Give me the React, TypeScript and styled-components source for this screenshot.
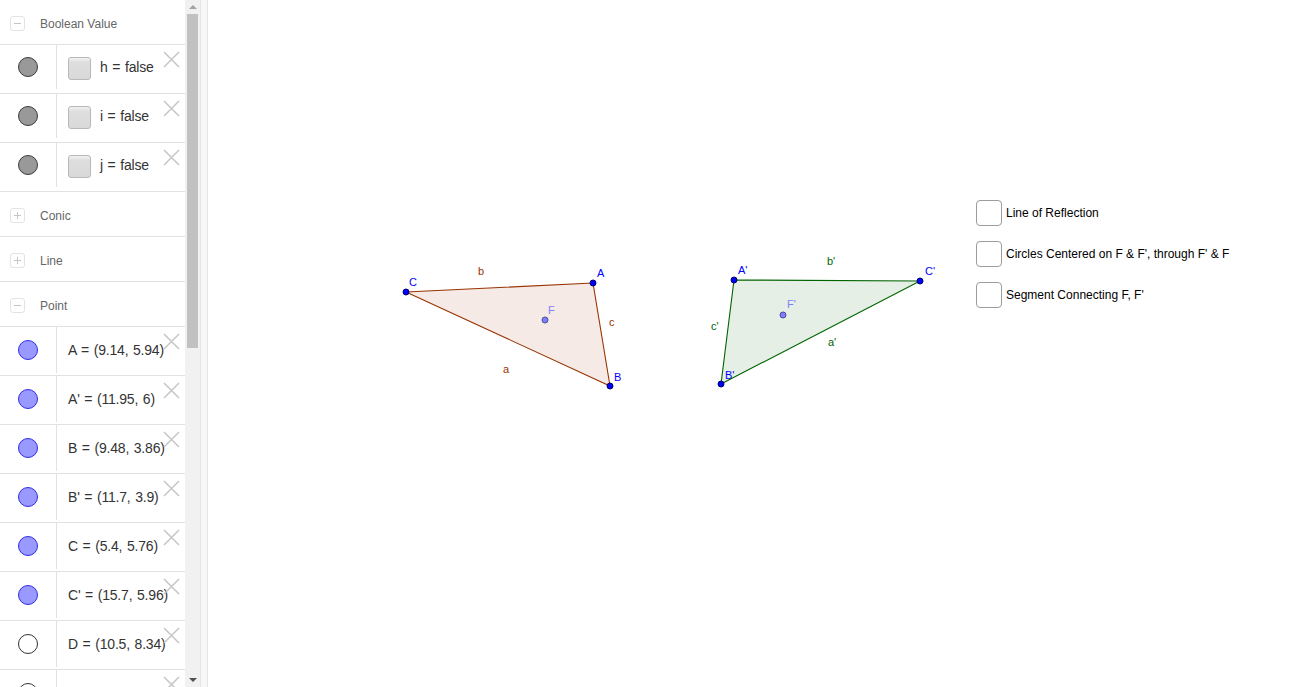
import React from "react";
import styled, { createGlobalStyle } from "styled-components";

const Global = createGlobalStyle`
  html, body { margin: 0; padding: 0; background: #fff; overflow: hidden; }
  body { font-family: "Liberation Sans", Arial, sans-serif; }
`;

const Page = styled.div`
  display: flex;
  width: 1313px;
  height: 687px;
  overflow: hidden;
`;

const Sidebar = styled.div`
  width: 185px;
  height: 687px;
  overflow: hidden;
  display: flex;
  flex-direction: column;
  flex-shrink: 0;
`;

const Scrollbar = styled.div`
  width: 15px;
  height: 687px;
  background: #f1f1f1;
  flex-shrink: 0;
  display: flex;
  flex-direction: column;
  align-items: center;
`;

const ScrollArrow = styled.div<{ $down?: boolean }>`
  width: 15px;
  height: 14px;
  display: flex;
  align-items: center;
  justify-content: center;
  &::after {
    content: "";
    width: 0;
    height: 0;
    border-left: 4px solid transparent;
    border-right: 4px solid transparent;
    ${(p) => (p.$down ? "border-top: 4px solid #505050;" : "border-bottom: 4px solid #a3a3a3;")}
  }
`;

const ScrollThumb = styled.div`
  width: 11px;
  height: 334px;
  background: #c1c1c1;
`;

const ScrollSpacer = styled.div`
  flex: 1;
`;

const Splitter = styled.div`
  width: 6px;
  height: 687px;
  background: #f7f7f7;
  border-left: 1px solid #e4e4e4;
  border-right: 1px solid #e4e4e4;
  flex-shrink: 0;
`;

const Canvas = styled.div`
  position: relative;
  flex: 1;
  height: 687px;
  background: #fff;
`;

const GroupHeader = styled.div`
  box-sizing: content-box;
  height: 41px;
  padding-top: 3px;
  border-bottom: 1px solid #e2e2e2;
  display: flex;
  align-items: center;
  flex-shrink: 0;
`;

const Toggle = styled.div`
  width: 13px;
  height: 13px;
  border: 1px solid #e3e3e3;
  border-radius: 3px;
  margin-left: 10px;
  margin-right: 15px;
  position: relative;
  display: flex;
  align-items: center;
  justify-content: center;
`;

const ToggleBar = styled.div<{ $vertical?: boolean }>`
  position: absolute;
  background: #c4c4c4;
  width: ${(p) => (p.$vertical ? "1px" : "7px")};
  height: ${(p) => (p.$vertical ? "7px" : "1px")};
`;

const GroupTitle = styled.span`
  font-family: "Liberation Sans", Arial, sans-serif;
  font-size: 12px;
  color: #666;
`;

const Row = styled.div<{ $lift?: number }>`
  position: relative;
  box-sizing: border-box;
  height: 49px;
  border-bottom: 1px solid #e2e2e2;
  display: flex;
  flex-shrink: 0;
  padding-bottom: ${(p) => p.$lift ?? 1}px;
`;

const MarbleCell = styled.div`
  width: 56px;
  border-right: 1px solid #e2e2e2;
  display: flex;
  align-items: center;
  justify-content: center;
  flex-shrink: 0;
`;

const Marble = styled.div<{ $fill: string; $stroke: string }>`
  width: 18px;
  height: 18px;
  border-radius: 50%;
  background: ${(p) => p.$fill};
  border: 1px solid ${(p) => p.$stroke};
`;

const Content = styled.div`
  flex: 1;
  display: flex;
  align-items: center;
  padding-left: 11px;
  white-space: nowrap;
  overflow: hidden;
`;

const BoolBox = styled.div`
  width: 21px;
  height: 21px;
  border: 1px solid #b8b8b8;
  border-radius: 3px;
  background: linear-gradient(#f2f2f2, #dedede 20%, #d9d9d9);
  margin-right: 9px;
  margin-top: 3px;
  flex-shrink: 0;
`;

const ValueText = styled.span`
  font-family: "Liberation Sans", Arial, sans-serif;
  font-size: 14px;
  color: #333;
  letter-spacing: -0.2px;
  word-spacing: 1px;
`;

const DeleteBtn = styled.div`
  position: absolute;
  top: 6px;
  right: 5px;
  width: 17px;
  height: 17px;
`;

const Check = styled.label`
  position: absolute;
  display: flex;
  align-items: center;
  gap: 4px;
  font-family: "Liberation Sans", Arial, sans-serif;
  font-size: 12px;
  color: #000;
`;

const CheckBox = styled.span`
  width: 24px;
  height: 24px;
  border: 1px solid #9c9c9c;
  border-radius: 4px;
  background: #fff;
  box-sizing: content-box;
`;

const XIcon = () => (
  <svg width="17" height="17" viewBox="0 0 17 17">
    <path d="M1 1 L16 16 M16 1 L1 16" stroke="#c6c6c6" strokeWidth="1.5" fill="none" />
  </svg>
);

const Header = ({ title, open }: { title: string; open: boolean }) => (
  <GroupHeader>
    <Toggle>
      <ToggleBar />
      {!open && <ToggleBar $vertical />}
    </Toggle>
    <GroupTitle>{title}</GroupTitle>
  </GroupHeader>
);

const boolRows = ["h", "i", "j"];
const pointRows: { t: string; fill: string; stroke: string }[] = [
  { t: "A = (9.14, 5.94)", fill: "#9999ff", stroke: "#2e2ee6" },
  { t: "A' = (11.95, 6)", fill: "#9999ff", stroke: "#2e2ee6" },
  { t: "B = (9.48, 3.86)", fill: "#9999ff", stroke: "#2e2ee6" },
  { t: "B' = (11.7, 3.9)", fill: "#9999ff", stroke: "#2e2ee6" },
  { t: "C = (5.4, 5.76)", fill: "#9999ff", stroke: "#2e2ee6" },
  { t: "C' = (15.7, 5.96)", fill: "#9999ff", stroke: "#2e2ee6" },
  { t: "D = (10.5, 8.34)", fill: "#ffffff", stroke: "#333333" },
  { t: "", fill: "#ffffff", stroke: "#333333" },
];

const OX = 208;

const Pt = ({ x, y, light }: { x: number; y: number; light?: boolean }) => (
  <circle
    cx={x - OX}
    cy={y}
    r={3}
    fill={light ? "#7f7fff" : "#0000ff"}
    stroke={light ? "#4c4c99" : "#000066"}
    strokeWidth={1}
  />
);

const Lbl = ({ x, y, c, t }: { x: number; y: number; c: string; t: string }) => (
  <text x={x - OX} y={y} fill={c} fontSize="11" fontFamily="Liberation Sans, Arial, sans-serif">
    {t}
  </text>
);

const Drawing = () => {
  const A = [593, 283], B = [610, 386], C = [406, 292];
  const A2 = [734, 280], B2 = [721, 384], C2 = [920, 281];
  const pts = (a: number[][]) => a.map((p) => `${p[0] - OX},${p[1]}`).join(" ");
  const brown = "#993300";
  const green = "#006400";
  const blue = "#0000ff";
  return (
    <svg width="1105" height="687" style={{ display: "block" }}>
      <polygon points={pts([A, B, C])} fill="rgba(153,51,0,0.1)" stroke={brown} strokeWidth={1.1} />
      <polygon points={pts([A2, B2, C2])} fill="rgba(0,100,0,0.1)" stroke={green} strokeWidth={1.1} />
      <Pt x={A[0]} y={A[1]} />
      <Pt x={B[0]} y={B[1]} />
      <Pt x={C[0]} y={C[1]} />
      <Pt x={545} y={320} light />
      <Pt x={A2[0]} y={A2[1]} />
      <Pt x={B2[0]} y={B2[1]} />
      <Pt x={C2[0]} y={C2[1]} />
      <Pt x={783} y={315} light />
      <Lbl x={409} y={286} c={blue} t="C" />
      <Lbl x={597} y={277} c={blue} t="A" />
      <Lbl x={614} y={381} c={blue} t="B" />
      <Lbl x={548} y={314} c="#7f7fff" t="F" />
      <Lbl x={478} y={275} c={brown} t="b" />
      <Lbl x={609} y={326} c={brown} t="c" />
      <Lbl x={503} y={373} c={brown} t="a" />
      <Lbl x={738} y={274} c={blue} t="A'" />
      <Lbl x={925} y={275} c={blue} t="C'" />
      <Lbl x={725} y={379} c={blue} t="B'" />
      <Lbl x={787} y={308} c="#7f7fff" t="F'" />
      <Lbl x={827} y={265} c={green} t="b'" />
      <Lbl x={711} y={330} c={green} t="c'" />
      <Lbl x={828} y={346} c={green} t="a'" />
    </svg>
  );
};

const checks = [
  { t: "Line of Reflection", y: 200 },
  { t: "Circles Centered on F & F', through F' & F", y: 241 },
  { t: "Segment Connecting F, F'", y: 282 },
];

export default function App() {
  return (
    <Page>
      <Global />
      <Sidebar>
        <Header title="Boolean Value" open />
        {boolRows.map((n) => (
          <Row key={n} $lift={4}>
            <MarbleCell>
              <Marble $fill="#999999" $stroke="#3a3a3a" />
            </MarbleCell>
            <Content>
              <BoolBox />
              <ValueText>{n} = false</ValueText>
            </Content>
            <DeleteBtn>
              <XIcon />
            </DeleteBtn>
          </Row>
        ))}
        <Header title="Conic" open={false} />
        <Header title="Line" open={false} />
        <Header title="Point" open />
        {pointRows.map((r, i) => (
          <Row key={i} $lift={2}>
            <MarbleCell>
              <Marble $fill={r.fill} $stroke={r.stroke} />
            </MarbleCell>
            <Content>{r.t && <ValueText>{r.t}</ValueText>}</Content>
            <DeleteBtn>
              <XIcon />
            </DeleteBtn>
          </Row>
        ))}
      </Sidebar>
      <Scrollbar>
        <ScrollArrow />
        <ScrollThumb />
        <ScrollSpacer />
        <ScrollArrow $down />
      </Scrollbar>
      <Splitter />
      <Canvas>
        <Drawing />
        {checks.map((c) => (
          <Check key={c.t} style={{ left: 976 - OX, top: c.y }}>
            <CheckBox />
            {c.t}
          </Check>
        ))}
      </Canvas>
    </Page>
  );
}
